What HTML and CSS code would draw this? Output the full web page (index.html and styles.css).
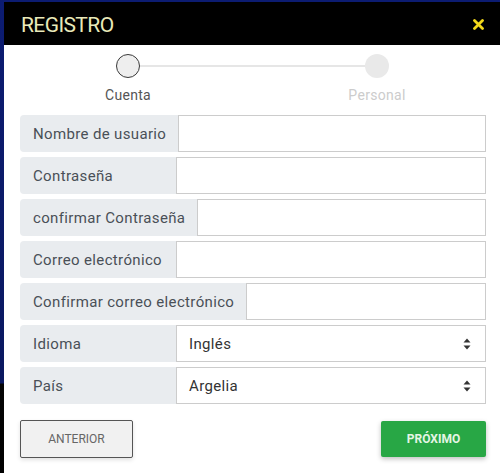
FILE: index.html
```html
<!DOCTYPE html>
<html lang="es">
<head>
<meta charset="utf-8">
<title>Registro</title>
<link rel="stylesheet" href="styles.css">
</head>
<body>
<div class="modal">
  <div class="modal-header">
    <h1 class="title">REGISTRO</h1>
    <svg class="close" width="11" height="11" viewBox="0 0 11 11"><path d="M1.5 1.5L9.5 9.5M9.5 1.5L1.5 9.5" stroke="#f3d81b" stroke-width="2.8" stroke-linecap="round"/></svg>
  </div>
  <div class="stepper">
    <div class="circle active"></div>
    <div class="line"></div>
    <div class="circle"></div>
    <div class="label active-label">Cuenta</div>
    <div class="label label-right">Personal</div>
  </div>
  <form class="form">
    <div class="row"><span class="addon">Nombre de usuario</span><input class="field" type="text"></div>
    <div class="row"><span class="addon">Contraseña</span><input class="field" type="password"></div>
    <div class="row"><span class="addon">confirmar Contraseña</span><input class="field" type="password"></div>
    <div class="row"><span class="addon">Correo electrónico</span><input class="field" type="text"></div>
    <div class="row"><span class="addon">Confirmar correo electrónico</span><input class="field" type="text"></div>
    <div class="row"><span class="addon">Idioma</span><div class="field select"><span>Inglés</span><svg class="caret" width="8" height="12" viewBox="0 0 8 12"><path d="M4 0.5L7.5 4.5H0.5Z M4 11.5L7.5 7.5H0.5Z" fill="#333"/></svg></div></div>
    <div class="row"><span class="addon">País</span><div class="field select"><span>Argelia</span><svg class="caret" width="8" height="12" viewBox="0 0 8 12"><path d="M4 0.5L7.5 4.5H0.5Z M4 11.5L7.5 7.5H0.5Z" fill="#333"/></svg></div></div>
    <div class="actions">
      <button type="button" class="btn btn-prev">ANTERIOR</button>
      <button type="button" class="btn btn-next">PRÓXIMO</button>
    </div>
  </form>
</div>
</body>
</html>
```
FILE: styles.css
```css
html, body {
  margin: 0;
  padding: 0;
  height: 100%;
}
body {
  background: linear-gradient(to bottom, #0c1c72 0, #0a1860 383px, #050505 384px, #000 100%);
  padding: 2px 0 0 4px;
  box-sizing: border-box;
  overflow: hidden;
  font-family: Roboto, "Noto Sans", sans-serif;
}
.modal {
  background: #fff;
  width: 496px;
  height: 471px;
}
.modal-header {
  background: #000;
  height: 43px;
  display: flex;
  align-items: center;
  justify-content: space-between;
  padding: 2px 16px 0 17px;
  box-sizing: border-box;
}
.title {
  margin: 0;
  font-weight: 400;
  font-size: 21px;
  color: #e9e9b9;
  letter-spacing: -0.6px;
}
.close {
  display: block;
}
.stepper {
  display: grid;
  grid-template-columns: 24px 1fr 24px;
  grid-template-rows: 24px auto;
  align-items: center;
  width: 273px;
  margin: 9px 0 0 112px;
  height: 61px;
  align-content: start;
}
.circle {
  width: 24px;
  height: 24px;
  border-radius: 50%;
  background: #e9e9e9;
  box-sizing: border-box;
}
.circle.active {
  background: #eee;
  border: 1.5px solid #3a3a3a;
}
.line {
  height: 2px;
  background: #e6e6e6;
}
.label {
  grid-row: 2;
  justify-self: center;
  font-size: 14px;
  letter-spacing: 0.3px;
  white-space: nowrap;
  margin-top: 9px;
  color: #ccc;
}
.active-label {
  grid-column: 1;
  color: #555;
}
.label-right {
  grid-column: 3;
}
.form {
  padding: 0 14px 0 16px;
  display: flex;
  flex-direction: column;
  gap: 5px;
}
.row {
  display: flex;
  height: 37px;
}
.addon {
  background: #e9ecef;
  border-radius: 4px 0 0 4px;
  min-width: 131px;
  padding: 0 12px 0 13px;
  display: flex;
  align-items: center;
  font-size: 15px;
  letter-spacing: 0.35px;
  color: #495057;
  white-space: nowrap;
}
.field {
  flex: 1;
  border: 1px solid #ccc;
  margin: 0;
  padding: 0 12px;
  box-sizing: border-box;
  height: 37px;
  font: inherit;
  background: #fff;
  outline: none;
}
.select {
  display: flex;
  align-items: center;
  justify-content: space-between;
  font-size: 15px;
  letter-spacing: 0.35px;
  color: #333;
  padding: 0 14px 0 12px;
}
.caret {
  display: block;
}
.actions {
  display: flex;
  justify-content: space-between;
  align-items: center;
  margin-top: 11px;
}
.btn {
  font-family: inherit;
  font-size: 12px;
  cursor: pointer;
  border-radius: 2px;
}
.btn-prev {
  width: 113px;
  height: 38px;
  background: #f1f1f1;
  border: 1px solid #555;
  color: #666;
  box-shadow: 0 2px 4px rgba(0,0,0,0.12);
}
.btn-next {
  width: 105px;
  height: 36px;
  background: #28a745;
  border: none;
  color: #e4f5e4;
  font-weight: 700;
  box-shadow: 0 2px 5px rgba(0,0,0,0.25);
}
```
